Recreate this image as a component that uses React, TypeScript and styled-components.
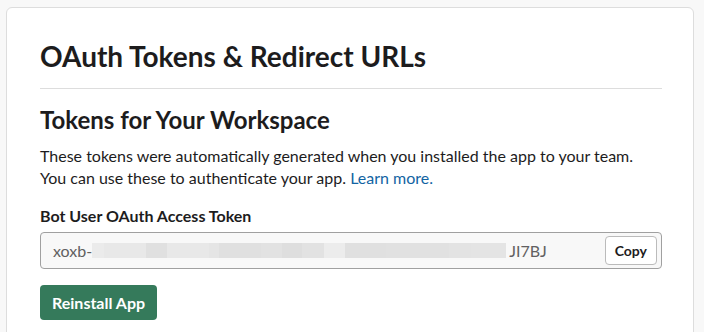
import React from 'react';
import styled, { createGlobalStyle } from 'styled-components';

const GlobalStyle = createGlobalStyle`
  html, body {
    margin: 0;
    background: #f8f8f8;
  }
  body {
    padding: 7px 10px 0 6px;
    font-family: Lato, "Noto Sans", sans-serif;
    color: #1d1c1d;
  }
`;

const Card = styled.div`
  background: #fff;
  border: 1px solid #dddddd;
  border-radius: 6px;
  padding: 30px 31px 40px 33px;
  min-height: 320px;
  box-sizing: border-box;
`;

const PageTitle = styled.h1`
  margin: 0;
  font-size: 28px;
  line-height: 36px;
  font-weight: 700;
`;

const Divider = styled.hr`
  margin: 14px 0 0;
  border: 0;
  border-top: 1px solid #dddddd;
`;

const SectionTitle = styled.h2`
  margin: 16px 0 0;
  font-size: 24px;
  line-height: 30px;
  font-weight: 700;
`;

const Body = styled.p`
  margin: 10px 0 0;
  font-size: 16px;
  line-height: 22px;
`;

const Link = styled.a`
  color: #1264a3;
  text-decoration: none;
`;

const Label = styled.div`
  margin-top: 16px;
  font-size: 16px;
  line-height: 22px;
  font-weight: 700;
`;

const TokenField = styled.div`
  margin-top: 5px;
  height: 37px;
  box-sizing: border-box;
  border: 1px solid #a0a0a0;
  border-radius: 4px;
  background: #f8f8f8;
  display: flex;
  align-items: center;
  padding: 0 4px 0 12px;
`;

const TokenText = styled.span`
  font-size: 16px;
  color: #616061;
  white-space: nowrap;
`;

const Blur = styled.div`
  display: flex;
  height: 15px;
  margin: 0 3px 0 0;
`;

const BlurSeg = styled.div<{ $w: number; $c: string }>`
  width: ${p => p.$w}px;
  background: ${p => p.$c};
`;

const Spacer = styled.div`
  flex: 1;
`;

const CopyButton = styled.button`
  height: 29px;
  padding: 0 9px;
  border: 1px solid #bbbbbb;
  border-radius: 4px;
  background: #fff;
  font-family: Lato, "Noto Sans", sans-serif;
  font-size: 14px;
  font-weight: 700;
  color: #1d1c1d;
`;

const PrimaryButton = styled.button`
  margin-top: 16px;
  height: 35px;
  padding: 0 12px;
  border: 0;
  border-radius: 4px;
  background: #357a5b;
  color: #fff;
  font-family: Lato, "Noto Sans", sans-serif;
  font-size: 16px;
  font-weight: 700;
`;

const blurSegments = [
  { w: 12, c: '#ebebeb' },
  { w: 42, c: '#e8e8e8' },
  { w: 21, c: '#e0e0e0' },
  { w: 42, c: '#e8e8e8' },
  { w: 10, c: '#e5e5e5' },
  { w: 42, c: '#e0e0e0' },
  { w: 21, c: '#e2e2e2' },
  { w: 20, c: '#dedede' },
  { w: 22, c: '#e2e2e2' },
  { w: 21, c: '#ececec' },
  { w: 41, c: '#e0e0e0' },
  { w: 63, c: '#e1e1e1' },
  { w: 22, c: '#e3e3e3' },
  { w: 35, c: '#e4e4e4' },
];

const App: React.FC = () => {
  return (
    <>
      <GlobalStyle />
      <Card>
        <PageTitle>OAuth Tokens &amp; Redirect URLs</PageTitle>
        <Divider />
        <SectionTitle>Tokens for Your Workspace</SectionTitle>
        <Body>
          These tokens were automatically generated when you installed the app to your team.
          <br />
          You can use these to authenticate your app. <Link href="#">Learn more.</Link>
        </Body>
        <Label>Bot User OAuth Access Token</Label>
        <TokenField>
          <TokenText>xoxb-</TokenText>
          <Blur>
            {blurSegments.map((s, i) => (
              <BlurSeg key={i} $w={s.w} $c={s.c} />
            ))}
          </Blur>
          <TokenText>JI7BJ</TokenText>
          <Spacer />
          <CopyButton>Copy</CopyButton>
        </TokenField>
        <PrimaryButton>Reinstall App</PrimaryButton>
      </Card>
    </>
  );
};

export default App;
